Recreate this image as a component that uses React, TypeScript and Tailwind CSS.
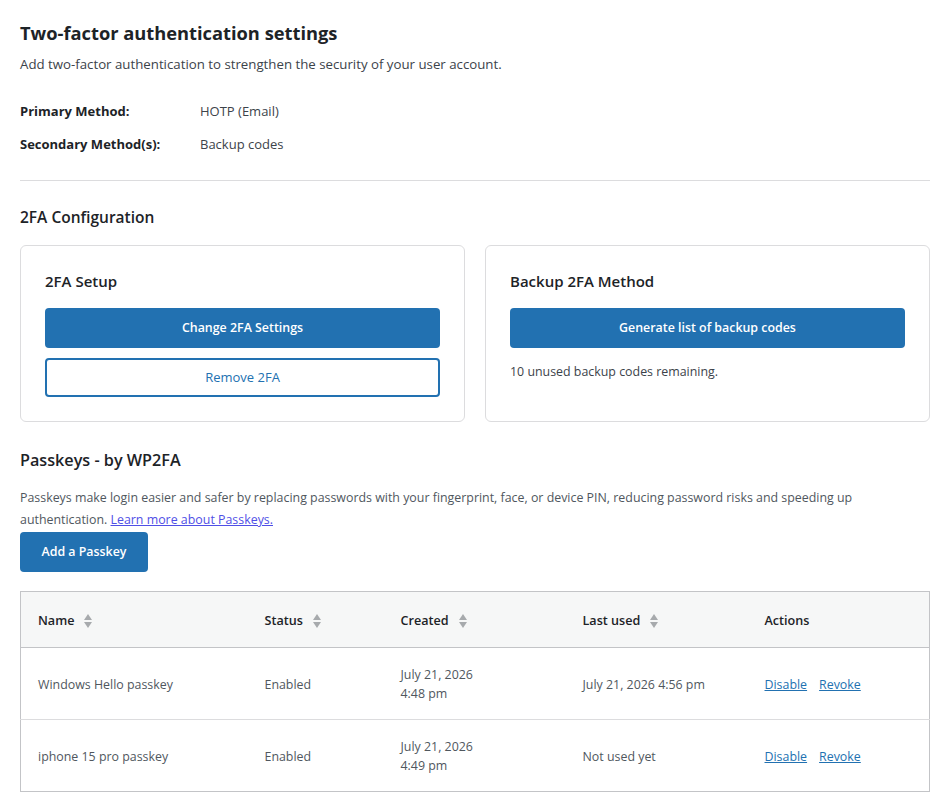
import React from 'react';

const SortIcon = () => (
    <svg width="10" height="18" viewBox="0 0 10 18" className="ml-[9px] shrink-0" aria-hidden="true">
        <path d="M5 2 L9 8 H1 Z" fill="#a7aaad" />
        <path d="M5 16 L9 10 H1 Z" fill="#a7aaad" />
    </svg>
);

interface Passkey {
    name: string;
    status: string;
    created: [string, string];
    lastUsed: string;
}

const passkeys: Passkey[] = [
    { name: 'Windows Hello passkey', status: 'Enabled', created: ['July 21, 2026', '4:48 pm'], lastUsed: 'July 21, 2026 4:56 pm' },
    { name: 'iphone 15 pro passkey', status: 'Enabled', created: ['July 21, 2026', '4:49 pm'], lastUsed: 'Not used yet' },
];

const columns = [
    { label: 'Name', width: 'w-[227px]', sortable: true },
    { label: 'Status', width: 'w-[136px]', sortable: true },
    { label: 'Created', width: 'w-[182px]', sortable: true },
    { label: 'Last used', width: 'w-[182px]', sortable: true },
    { label: 'Actions', width: '', sortable: false },
];

const App: React.FC = () => {
    return (
        <div className="min-h-screen bg-white pl-5 pr-[18px] text-[12.4px] text-[#50575e] font-['Open_Sans','Noto_Sans',sans-serif]">
            {/* Header */}
            <h1 className="pt-[20px] text-[18.3px] font-bold leading-[26px] text-[#1d2327]">
                Two-factor authentication settings
            </h1>
            <p className="mt-[9px] text-[13.25px] leading-[18px] text-[#3c434a]">
                Add two-factor authentication to strengthen the security of your user account.
            </p>

            <div className="mt-[29px] flex flex-col gap-[15px] text-[13px] text-[#3c434a]">
                <div className="flex leading-[18px]">
                    <span className="w-[180px] font-bold text-[#1d2327]">Primary Method:</span>
                    <span>HOTP (Email)</span>
                </div>
                <div className="flex leading-[18px]">
                    <span className="w-[180px] font-bold text-[#1d2327]">Secondary Method(s):</span>
                    <span>Backup codes</span>
                </div>
            </div>

            <hr className="mt-[27px] border-t border-[#dcdcde]" />

            {/* 2FA configuration */}
            <h2 className="mt-[26px] text-[15.5px] font-semibold leading-[20px] text-[#1d2327]">2FA Configuration</h2>

            <div className="mt-[18px] grid grid-cols-2 gap-5">
                <div className="h-[177px] rounded-md border border-[#dcdcde] px-6 pt-[25px]">
                    <h3 className="text-[15px] font-semibold leading-[20px] text-[#1d2327]">2FA Setup</h3>
                    <button className="mt-[17px] flex h-10 w-full items-center justify-center rounded-[4px] bg-[#2271b1] text-[12.4px] font-semibold text-white">
                        Change 2FA Settings
                    </button>
                    <button className="mt-[10px] flex h-[39px] w-full items-center justify-center rounded-[4px] border-2 border-[#2271b1] bg-white text-[13px] text-[#2271b1]">
                        Remove 2FA
                    </button>
                </div>
                <div className="h-[177px] rounded-md border border-[#dcdcde] px-6 pt-[25px]">
                    <h3 className="text-[15px] font-semibold leading-[20px] text-[#1d2327]">Backup 2FA Method</h3>
                    <button className="mt-[17px] flex h-10 w-full items-center justify-center rounded-[4px] bg-[#2271b1] text-[12.4px] font-semibold text-white">
                        Generate list of backup codes
                    </button>
                    <p className="mt-[15px] leading-[18px] text-[#3c434a]">10 unused backup codes remaining.</p>
                </div>
            </div>

            {/* Passkeys */}
            <h2 className="mt-[27px] text-[16.2px] font-semibold leading-[22px] text-[#1d2327]">Passkeys - by WP2FA</h2>
            <p className="mt-[16px] leading-[22px]">
                Passkeys make login easier and safer by replacing passwords with your fingerprint, face, or device PIN, reducing password risks and speeding up
                <br />
                authentication.{' '}
                <a href="#" className="text-[#4f4fe6] underline">Learn more about Passkeys.</a>
            </p>
            <button className="mt-px h-10 w-[128px] rounded-[4px] bg-[#2271b1] text-[12.4px] font-semibold text-white">
                Add a Passkey
            </button>

            <table className="mt-[19px] w-full border-collapse border border-[#c3c4c7] text-left">
                <thead>
                    <tr className="h-[56px] border-b border-[#c3c4c7] bg-[#f6f7f7]">
                        {columns.map((c) => (
                            <th key={c.label} className={`${c.width} pl-[17px] pt-[3px] text-[12.6px] font-semibold text-[#1d2327]`}>
                                <span className="inline-flex items-center">
                                    {c.label}
                                    {c.sortable && <SortIcon />}
                                </span>
                            </th>
                        ))}
                    </tr>
                </thead>
                <tbody>
                    {passkeys.map((p, idx) => (
                        <tr key={idx} className="h-[72px] border-b border-[#dcdcde] last:border-b-0">
                            <td className="pl-[17px] pt-[3px]">{p.name}</td>
                            <td className="pl-[17px] pt-[3px]">{p.status}</td>
                            <td className="pl-[17px] leading-[19px]">
                                {p.created[0]}
                                <br />
                                {p.created[1]}
                            </td>
                            <td className="pl-[17px] pt-[3px]">{p.lastUsed}</td>
                            <td className="pl-[17px] pt-[3px]">
                                <a href="#" className="text-[#2271b1] underline">Disable</a>
                                <a href="#" className="ml-3 text-[#2271b1] underline">Revoke</a>
                            </td>
                        </tr>
                    ))}
                </tbody>
            </table>
        </div>
    );
};

export default App;
